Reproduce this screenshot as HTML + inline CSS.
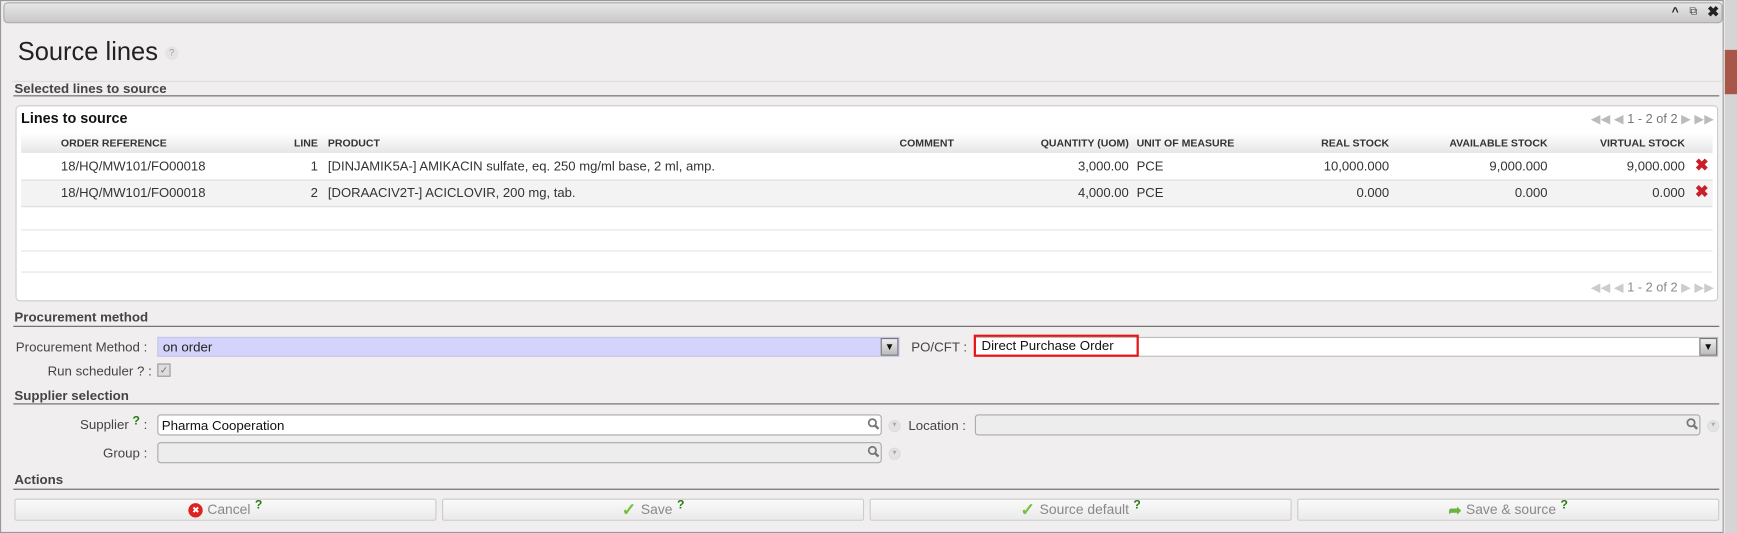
<!DOCTYPE html>
<html><head><meta charset="utf-8"><style>
html,body{margin:0;padding:0;width:1737px;height:533px;overflow:hidden;background:#fff}
#w{position:absolute;left:0;top:0;width:1568px;height:481px;transform:scale(1.10778,1.10811);transform-origin:0 0;background:#f0eeee;font-family:"Liberation Sans",sans-serif;font-size:12px;color:#222}
.a{position:absolute;white-space:nowrap}
.h{font-weight:bold;color:#444;font-size:12px}
.ln{position:absolute;height:1px;background:#666}
.th{position:absolute;top:124px;font-size:9.5px;font-weight:bold;color:#333}
.r{text-align:right}
.c{font-size:11.8px;color:#333}
.lbl{color:#444;text-align:right}
.inp{position:absolute;border:1px solid #aaa;border-radius:3px;box-sizing:border-box}
.btn{position:absolute;top:450px;height:20px;border:1px solid #ccc;border-radius:2px;background:linear-gradient(#fafafa,#eaeaea);box-sizing:border-box;color:#888;font-size:12.5px;display:flex;align-items:center;justify-content:center;gap:4px}
.q{color:#2a7a1a;font-weight:bold;font-size:11px;position:relative;top:-4px}
.x{position:absolute;color:#c8202a;font-weight:bold;font-size:15px}
.dd{position:absolute;width:16px;height:16px;border:1px solid #777;background:linear-gradient(#eee,#bbb);box-sizing:border-box;font-size:9px;text-align:center;line-height:15px;color:#111}
.sr{position:absolute;width:11px;height:11px}
.cir{position:absolute;width:9px;height:9px;border-radius:50%;background:#e3e3e3;border:1px solid #ddd;font-size:6px;color:#aaa;text-align:center;line-height:9px}
</style></head><body><div id="w">
<div class="a" style="left:1557px;top:0;width:11px;height:481px;background:#d5d5d5"></div>
<div class="a" style="left:1557px;top:45px;width:11px;height:40px;background:#a8564a"></div>
<div class="a" style="left:0;top:0;width:1556px;height:481px;border:1px solid #999;box-sizing:border-box;background:#f0eeee"></div>
<div class="a" style="left:3px;top:2px;width:1552px;height:19px;border:1px solid #aaa;border-radius:4px;box-sizing:border-box;background:linear-gradient(#e6e6e6,#c9c9c9)"></div>
<div class="a" style="left:1509px;top:5px;font-size:11px;font-weight:bold">^</div>
<div class="a" style="left:1525px;top:5px;font-size:10px;color:#444">⧉</div>
<div class="a" style="left:1541px;top:3px;font-size:13px;font-weight:bold">✖</div>
<div class="a" style="left:16px;top:33px;font-size:23px;color:#222">Source lines</div>
<div class="a" style="left:149px;top:42px;width:12px;height:12px;border-radius:50%;background:#e4e4e4;font-size:8px;color:#999;text-align:center;line-height:12px">?</div>
<div class="ln" style="left:11px;top:73px;width:1543px;background:#ddd"></div>
<div class="a h" style="left:13px;top:73px">Selected lines to source</div>
<div class="ln" style="left:12px;top:86px;width:1540px"></div>
<div class="a" style="left:14px;top:95px;width:1537px;height:177px;background:#fff;border:1px solid #ccc;border-radius:4px;box-sizing:border-box"></div>
<div class="a" style="left:19px;top:99px;font-weight:bold;font-size:13px;color:#111">Lines to source</div>
<div class="a" style="left:1436px;top:100px;color:#bbb;font-size:11.5px">◀◀ ◀ <span style="color:#777">1 - 2 of 2</span> ▶ ▶▶</div>
<div class="a" style="left:19px;top:120px;width:1527px;height:18px;background:linear-gradient(#fff,#e6e6e6)"></div>
<div class="th" style="left:55px">ORDER REFERENCE</div>
<div class="th r" style="left:240px;width:47px">LINE</div>
<div class="th" style="left:296px">PRODUCT</div>
<div class="th" style="left:812px">COMMENT</div>
<div class="th r" style="left:900px;width:119px">QUANTITY (UOM)</div>
<div class="th" style="left:1026px">UNIT OF MEASURE</div>
<div class="th r" style="left:1140px;width:114px">REAL STOCK</div>
<div class="th r" style="left:1280px;width:117px">AVAILABLE STOCK</div>
<div class="th r" style="left:1420px;width:101px">VIRTUAL STOCK</div>
<div class="a" style="left:19px;top:162px;width:1527px;height:24px;background:#f3f3f3"></div>
<div class="ln" style="left:19px;top:162px;width:1527px;background:#ddd"></div>
<div class="ln" style="left:19px;top:186px;width:1527px;background:#ddd"></div>
<div class="ln" style="left:19px;top:207px;width:1527px;background:#e3e3e3"></div>
<div class="ln" style="left:19px;top:226px;width:1527px;background:#e3e3e3"></div>
<div class="ln" style="left:19px;top:245px;width:1527px;background:#e3e3e3"></div>
<div class="a c" style="left:55px;top:143px">18/HQ/MW101/FO00018</div>
<div class="a c r" style="left:240px;top:143px;width:47px">1</div>
<div class="a c" style="left:296px;top:143px">[DINJAMIK5A-] AMIKACIN sulfate, eq. 250 mg/ml base, 2 ml, amp.</div>
<div class="a c r" style="left:900px;top:143px;width:119px">3,000.00</div>
<div class="a c" style="left:1026px;top:143px">PCE</div>
<div class="a c r" style="left:1140px;top:143px;width:114px">10,000.000</div>
<div class="a c r" style="left:1280px;top:143px;width:117px">9,000.000</div>
<div class="a c r" style="left:1420px;top:143px;width:101px">9,000.000</div>
<div class="x" style="left:1530px;top:140px">✖</div>
<div class="a c" style="left:55px;top:167px">18/HQ/MW101/FO00018</div>
<div class="a c r" style="left:240px;top:167px;width:47px">2</div>
<div class="a c" style="left:296px;top:167px">[DORAACIV2T-] ACICLOVIR, 200 mg, tab.</div>
<div class="a c r" style="left:900px;top:167px;width:119px">4,000.00</div>
<div class="a c" style="left:1026px;top:167px">PCE</div>
<div class="a c r" style="left:1140px;top:167px;width:114px">0.000</div>
<div class="a c r" style="left:1280px;top:167px;width:117px">0.000</div>
<div class="a c r" style="left:1420px;top:167px;width:101px">0.000</div>
<div class="x" style="left:1530px;top:164px">✖</div>
<div class="a" style="left:1436px;top:252px;color:#ccc;font-size:11.5px">◀◀ ◀ <span style="color:#888">1 - 2 of 2</span> ▶ ▶▶</div>

<div class="a h" style="left:13px;top:279px">Procurement method</div>
<div class="ln" style="left:12px;top:294px;width:1540px"></div>
<div class="a lbl" style="left:0;top:306px;width:133px">Procurement Method :</div>
<div class="a" style="left:142px;top:304px;width:670px;height:18px;background:#d3d3fb;border:1px solid #c6c6e6;box-sizing:border-box;padding:1px 4px">on order</div>
<div class="dd" style="left:795px;top:305px">▼</div>
<div class="a lbl" style="left:800px;top:306px;width:73px">PO/CFT :</div>
<div class="a" style="left:880px;top:304px;width:671px;height:18px;background:#fff;border:1px solid #bbb;box-sizing:border-box"></div>
<div class="a" style="left:879px;top:302px;width:149px;height:20px;border:2px solid #e8141a;box-sizing:border-box;padding:1px 5px;color:#111">Direct Purchase Order</div>
<div class="dd" style="left:1534px;top:305px">▼</div>
<div class="a lbl" style="left:0;top:328px;width:137px">Run scheduler ? :</div>
<div class="a" style="left:142px;top:328px;width:10px;height:10px;border:1px solid #999;background:#ddd;font-size:9px;line-height:10px;color:#777;text-align:center">✓</div>

<div class="a h" style="left:13px;top:350px">Supplier selection</div>
<div class="ln" style="left:12px;top:364px;width:1540px"></div>
<div class="a lbl" style="left:0;top:376px;width:133px">Supplier <span class="q">?</span> :</div>
<div class="inp" style="left:142px;top:374px;width:654px;height:19px;background:#fff;padding:2px 3px;color:#111">Pharma Cooperation</div>
<svg class="sr" style="left:783px;top:377px" viewBox="0 0 11 11"><circle cx="4.5" cy="4.5" r="3.3" fill="none" stroke="#777" stroke-width="1.6"/><path d="M7 7l3 3" stroke="#777" stroke-width="2.2"/></svg>
<div class="cir" style="left:802px;top:379px">▼</div>
<div class="a lbl" style="left:800px;top:377px;width:72px">Location :</div>
<div class="inp" style="left:880px;top:374px;width:655px;height:19px;background:#eeeded"></div>
<svg class="sr" style="left:1522px;top:377px" viewBox="0 0 11 11"><circle cx="4.5" cy="4.5" r="3.3" fill="none" stroke="#777" stroke-width="1.6"/><path d="M7 7l3 3" stroke="#777" stroke-width="2.2"/></svg>
<div class="cir" style="left:1541px;top:379px">▼</div>
<div class="a lbl" style="left:0;top:402px;width:133px">Group :</div>
<div class="inp" style="left:142px;top:399px;width:654px;height:19px;background:#eeeded"></div>
<svg class="sr" style="left:783px;top:402px" viewBox="0 0 11 11"><circle cx="4.5" cy="4.5" r="3.3" fill="none" stroke="#777" stroke-width="1.6"/><path d="M7 7l3 3" stroke="#777" stroke-width="2.2"/></svg>
<div class="cir" style="left:802px;top:404px">▼</div>

<div class="a h" style="left:13px;top:426px">Actions</div>
<div class="ln" style="left:12px;top:441px;width:1540px"></div>
<div class="btn" style="left:13px;width:381px"><span style="display:inline-block;width:13px;height:13px;border-radius:50%;background:#d22;color:#fff;font-size:8px;line-height:13px;text-align:center">✖</span><span>Cancel</span><span class="q">?</span></div>
<div class="btn" style="left:399px;width:381px"><span style="color:#7bc043;font-size:16px;font-weight:bold">✓</span><span>Save</span><span class="q">?</span></div>
<div class="btn" style="left:785px;width:381px"><span style="color:#7bc043;font-size:16px;font-weight:bold">✓</span><span>Source default</span><span class="q">?</span></div>
<div class="btn" style="left:1171px;width:381px"><span style="color:#6cb33f;font-size:14px;font-weight:bold">➦</span><span>Save &amp; source</span><span class="q">?</span></div>
</div></body></html>
